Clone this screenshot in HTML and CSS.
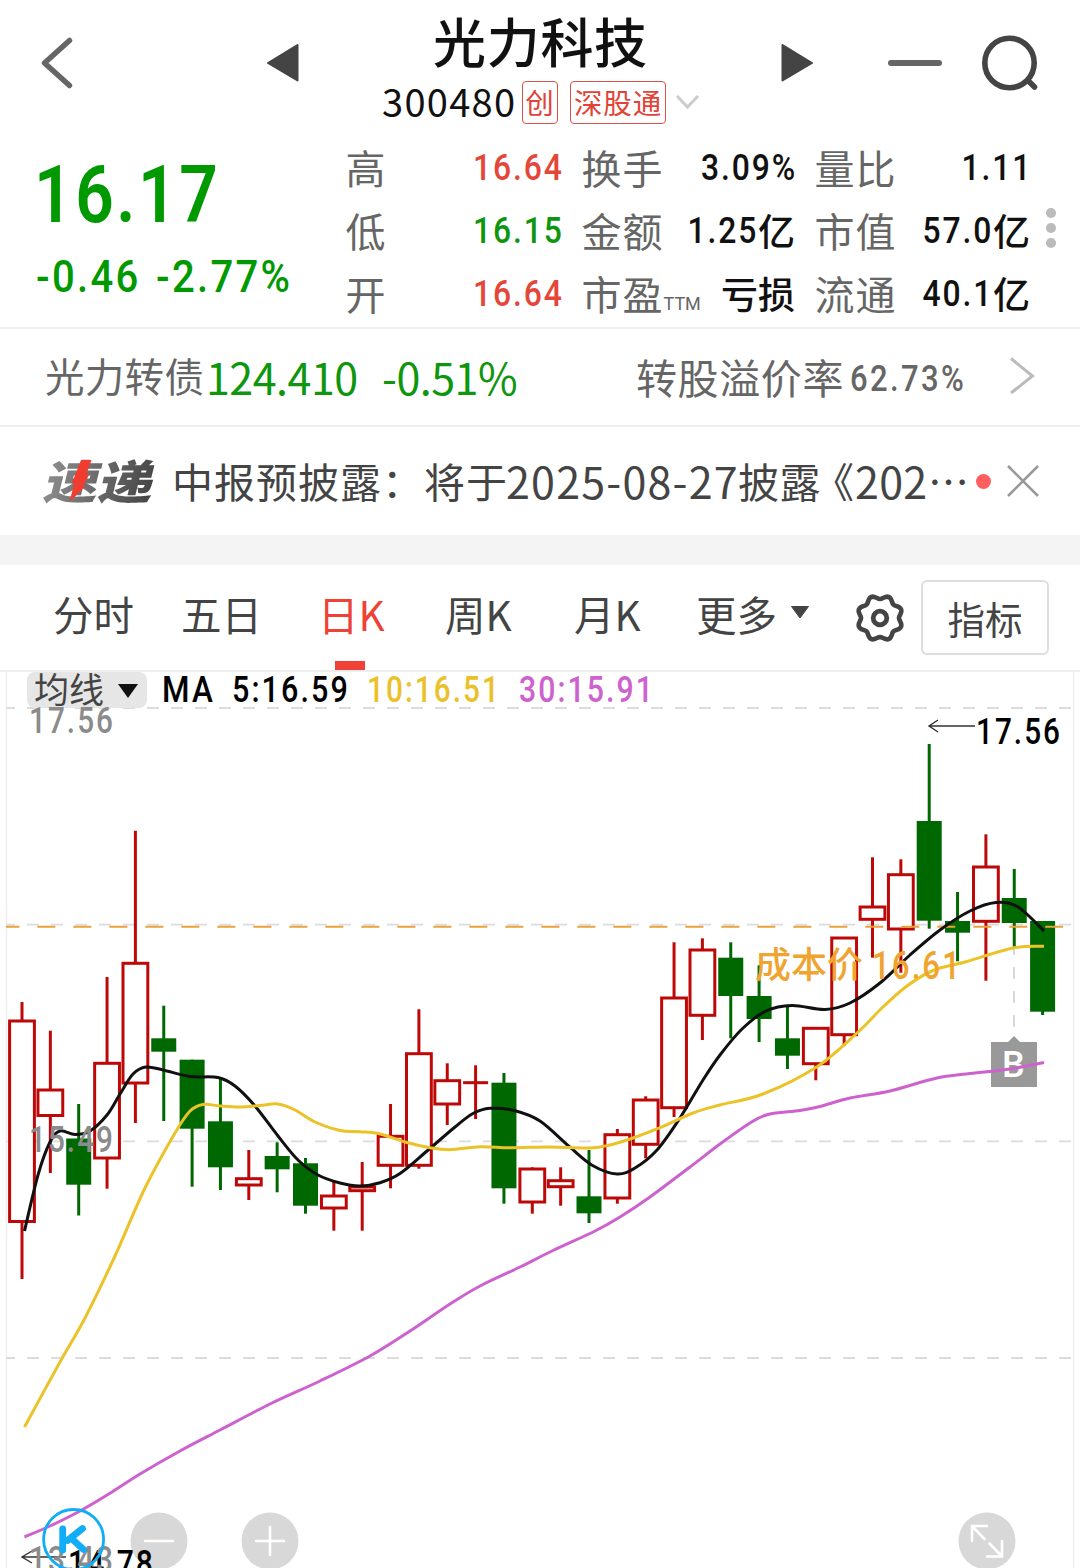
FILE: index.html
```html
<!DOCTYPE html>
<html lang="zh-CN">
<head>
<meta charset="utf-8">
<title>光力科技 300480</title>
<link rel="stylesheet" href="styles.css">
</head>
<body>
<header class="topbar">
  <svg class="ico" width="40" height="60" viewBox="37 33 40 60"><path d="M69.500 40.500L44.500 63L69.500 85.500" fill="none" stroke="#666" stroke-width="5.500" stroke-linecap="round" stroke-linejoin="round"/></svg>
  <svg class="ico" width="36" height="42" viewBox="265 42 36 42"><path d="M268 63L297.500 45V80.500Z" fill="#444" stroke="#444" stroke-width="2" stroke-linejoin="round"/></svg>
  <div class="name">
    <h1>光力科技</h1>
    <div class="code"><span class="num">300480</span><span class="tag one">创</span><span class="tag three">深股通</span>
      <svg width="26" height="18" viewBox="674 93 26 18"><path d="M677 96L687.500 107L698 96" fill="none" stroke="#ccc" stroke-width="3"/></svg></div>
  </div>
  <svg class="ico" width="36" height="42" viewBox="779 42 36 42"><path d="M812 63L782.500 45V80.500Z" fill="#444" stroke="#444" stroke-width="2" stroke-linejoin="round"/></svg>
  <svg class="ico" width="60" height="20" viewBox="885 53 60 20"><path d="M891 63H939" stroke="#666" stroke-width="6" stroke-linecap="round"/></svg>
  <svg class="ico" width="64" height="64" viewBox="977 31 64 64"><g fill="none" stroke="#444" stroke-width="5.600" stroke-linecap="round"><circle cx="1009.500" cy="63" r="24.700"/><path d="M1028 80.500L1034.500 87"/></g></svg>
</header>

<section class="quote">
  <div class="price">
    <div class="big din">16.17</div>
    <div class="chg"><span class="din">-0.46</span><span class="din">-2.77%</span></div>
  </div>
  <div class="stats">
    <div class="k">高</div><div class="v red"><b class="din">16.64</b></div>
    <div class="k">换手</div><div class="v"><b class="din">3.09%</b></div>
    <div class="k">量比</div><div class="v"><b class="din">1.11</b></div>
    <div class="k">低</div><div class="v green"><b class="din">16.15</b></div>
    <div class="k">金额</div><div class="v"><b class="din">1.25</b><i>亿</i></div>
    <div class="k">市值</div><div class="v"><b class="din">57.0</b><i>亿</i></div>
    <div class="k">开</div><div class="v red"><b class="din">16.64</b></div>
    <div class="k">市盈<small>TTM</small></div><div class="v"><i>亏损</i></div>
    <div class="k">流通</div><div class="v"><b class="din">40.1</b><i>亿</i></div>
  </div>
  <div class="dots"><span></span><span></span><span></span></div>
</section>

<section class="bond">
  <span class="bname">光力转债</span><span class="bnum p">124.410</span><span class="bnum c">-0.51%</span>
  <span class="prem">转股溢价率</span><span class="pval din">62.73%</span>
  <svg width="28" height="42" viewBox="1008 355 28 42"><path d="M1011 358.500L1032.500 376L1011 393" fill="none" stroke="#bbb" stroke-width="3"/></svg>
</section>

<section class="news">
  <svg class="logo" width="120" height="50" viewBox="38 456 120 50">
    <defs><linearGradient id="steel" x1="0" x2="1"><stop offset="0" stop-color="#8c8c8c"/><stop offset="1" stop-color="#454545"/></linearGradient></defs>
    <text transform="translate(42 499) skewX(-14)" textLength="109" lengthAdjust="spacingAndGlyphs" class="logotext" fill="url(#steel)">速递</text>
    <path d="M81 460H91.500L86.500 474L89 475L83.500 485L85.500 486L69.500 502L74 484L72 483Z" fill="#f13c30"/>
  </svg>
  <span class="cn t1">中报预披露：将于</span><span class="lt t2">2025-08-27</span><span class="cn t3">披露</span><span class="cn t4">《</span><span class="lt t5">202</span><span class="cn t6">…</span>
  <span class="reddot"></span>
  <svg width="34" height="34" viewBox="1006 465 34 34"><path d="M1008 467L1038 497M1038 467L1008 497" stroke="#999" stroke-width="2.600"/></svg>
</section>
<div class="band"></div>

<nav class="tabs">
  <span>分时</span><span>五日</span><span class="on">日K</span><span>周K</span><span>月K</span><span>更多</span>
  <svg class="drop" width="20" height="14" viewBox="790 605 20 14"><path d="M791.500 606.500H808.500L800 618Z" fill="#444" stroke="#444" stroke-linejoin="round"/></svg>
  <svg class="gear" width="52" height="52" viewBox="-26 -26 52 52"><path id="gear" fill="none" stroke="#444" stroke-width="4.600"/><circle r="6.800" fill="none" stroke="#444" stroke-width="4.800"/></svg>
  <button>指标</button>
</nav>

<svg class="chart" width="1080" height="896" viewBox="0 672 1080 896">
  <path d="M6.500 672V1568M1073.500 672V1568" stroke="#eee" stroke-width="1.500"/>
  <g class="grid"><path d="M6 708H1071"/><path d="M6 924.700H1071"/><path d="M6 1141.300H1071"/><path d="M6 1358H1071"/></g>
  <rect x="27" y="672" width="120" height="36" rx="8" fill="#e6e6e6"/>
  <text x="34" y="702.500" textLength="70" class="cn35">均线</text>
  <path d="M118 684H138L128 698Z" fill="#111"/>
  <g class="d">
    <text x="162" y="702" textLength="53" lengthAdjust="spacingAndGlyphs">MA</text>
    <text x="232" y="702" textLength="118" lengthAdjust="spacingAndGlyphs">5:16.59</text>
    <text x="367" y="702" textLength="134" lengthAdjust="spacingAndGlyphs" fill="#ebc12b">10:16.51</text>
    <text x="519" y="702" textLength="136" lengthAdjust="spacingAndGlyphs" fill="#cd62cf">30:15.91</text>
  </g>
  <g id="candles"></g>
  <path d="M6 926.700H1063" stroke="#e9a23b" stroke-width="2" stroke-dasharray="18 18" stroke-dashoffset="4.700"/>
  <path d="M1014 947V1030" stroke="#d8d8d8" stroke-width="2" stroke-dasharray="12 12" stroke-dashoffset="4"/>
  <path d="M991 1042H1008L1014 1036L1020 1042H1037V1087H991Z" fill="#999"/>
  <text x="1002" y="1077" class="b">B</text>
  <g id="lines"></g>
  <g class="d grey">
    <text x="29" y="733" textLength="86" lengthAdjust="spacingAndGlyphs">17.56</text>
    <text x="29" y="1152" textLength="86" lengthAdjust="spacingAndGlyphs">15.49</text>
  </g>
  <text x="755" y="978" textLength="108" class="cost">成本价</text>
  <text x="872" y="979" textLength="90" lengthAdjust="spacingAndGlyphs" class="d cnum">16.61</text>
  <text x="976" y="744" textLength="86" lengthAdjust="spacingAndGlyphs" class="d">17.56</text>
  <path d="M929 726H975M938 720L929 726L938 732" fill="none" stroke="#333" stroke-width="1.400"/>
  <g fill="#d8d8d8"><circle cx="159" cy="1541" r="28.500"/><circle cx="270" cy="1541" r="28.500"/><circle cx="987" cy="1541" r="28.500"/></g>
  <g fill="none" stroke="#fff" stroke-width="2.600" stroke-linecap="round" stroke-linejoin="round">
    <path d="M145 1541H173M256 1541H284M270 1527V1555"/>
    <path d="M987 1526H972V1541M972 1526L984.500 1539M987 1556.500H1002V1541M1002 1556.500L989.500 1543.500"/>
  </g>
  <path d="M22 1557H66M32 1551L22 1557L32 1563" fill="none" stroke="#333" stroke-width="1.400"/>
  <text x="68" y="1575.500" textLength="87" lengthAdjust="spacingAndGlyphs" class="d">14.78</text>
  <text x="29" y="1572" textLength="86" lengthAdjust="spacingAndGlyphs" class="d grey">13.43</text>
  <g fill="none" stroke="#12adf7"><circle cx="73.600" cy="1539.500" r="30" stroke-width="2.800"/><path d="M62.700 1529V1550M82.500 1528.500L67.500 1540.500M71 1538L83.500 1549.500" stroke-width="6.800" stroke-linecap="round"/></g>
</svg>
<script src="chart.js"></script>
</body>
</html>
```
FILE: styles.css
```css
* { box-sizing: border-box; }
body { margin: 0; width: 1080px; height: 1568px; overflow: hidden; background: #fff; color: #111; font-family: "Noto Sans CJK SC", sans-serif; }
svg { display: block; flex: none; }
.din { display: inline-block; font-family: Roboto, sans-serif; font-weight: 500; transform: scaleX(.85); transform-origin: left center; white-space: nowrap; }

.topbar { height: 137px; display: grid; grid-template-columns: 228px 101px 413px 106px 92px 95px; padding-left: 37px; }
.topbar .ico { align-self: start; margin-top: 33px; }
.topbar .ico:nth-child(2), .topbar .ico:nth-child(4) { margin-top: 42px; }
.topbar .ico:nth-child(5) { margin-top: 53px; }
.topbar .ico:nth-child(6) { margin-top: 31px; }
.name { padding-left: 16px; }
h1 { margin: 6px 0 2px 51px; font-size: 53px; line-height: 68px; font-weight: 500; letter-spacing: .7px; white-space: nowrap; }
.code { display: flex; align-items: center; height: 52px; }
.num { width: 140px; font-size: 38px; letter-spacing: 1.3px; line-height: 52px; margin-top: -3px; }
.tag { height: 43px; border: 1.500px solid #dc5247; border-radius: 4px; color: #e34236; font-size: 28.500px; line-height: 40px; text-align: center; white-space: nowrap; letter-spacing: .8px; }
.tag.one { width: 36px; margin-right: 12px; }
.tag.three { width: 96px; margin-right: 8px; }

.quote { height: 192px; display: flex; border-bottom: 2px solid #eee; }
.price { width: 346px; padding-left: 35px; color: #090; }
.big { display: block; font-size: 79.500px; line-height: 80px; letter-spacing: 3px; margin: 18px 0 0 -1px; font-weight: 600; }
.chg { display: flex; margin: 15px 0 0 1px; font-size: 45px; line-height: 54px; letter-spacing: 2.600px; }
.chg .din { transform: scaleX(.89); }
.chg .din:first-child { width: 120px; }
.stats { display: grid; grid-template-columns: 96px 140px 114px 119px 88px 127px; grid-template-rows: repeat(3, 63px); width: 684px; }
.stats .k { color: #666; font-size: 40px; line-height: 60px; letter-spacing: 1px; white-space: nowrap; text-indent: -.5px; }
.stats .k small { font-family: Roboto, sans-serif; font-size: 18px; letter-spacing: 0; }
.stats .v { display: flex; justify-content: flex-end; padding-right: 20px; font-size: 37.500px; line-height: 60px; white-space: nowrap; }
.stats .v:nth-child(6n) { padding-right: 0; }
.stats .v i { font-style: normal; font-size: 37px; font-weight: 500; }
.stats .v .din { letter-spacing: 2.200px; transform-origin: right center; line-height: 61px; }
.stats .v .din:last-child { margin-right: -2px; }
.red { color: #e5463a; } .green { color: #0f960f; }
.dots { padding: 71px 0 0 16px; display: flex; flex-direction: column; gap: 5.500px; }
.dots span { width: 9.500px; height: 9.500px; border-radius: 50%; background: #bbb; }

.bond { height: 98px; border-bottom: 2px solid #eee; display: flex; align-items: center; padding: 0 0 2px 45px; white-space: nowrap; color: #666; }
.bname { font-size: 39.500px; letter-spacing: .3px; width: 161px; margin-top: -3px; }
.bnum { color: #0f960f; font-size: 43px; letter-spacing: -.5px; }
.bnum.p { width: 176px; } .bnum.c { width: 254px; }
.prem { font-size: 41px; letter-spacing: .6px; width: 214px; }
.pval { font-size: 36.500px; letter-spacing: 2.800px; width: 158px; padding-top: 5px; }

.news { height: 108px; display: flex; align-items: center; padding-left: 38px; white-space: nowrap; color: #444; font-size: 41px; }
.news > span:not(.reddot) { margin-top: -2px; }
.logo { margin: 0 14px 0 0; }
.logotext { font-family: "Noto Sans CJK SC", sans-serif; font-weight: 900; font-size: 46px; }
.t1 { width: 334px; letter-spacing: 1px; } .t2 { width: 232px; font-size: 43px; letter-spacing: 1.200px; }
.t3 { width: 75px; letter-spacing: .5px; } .t4 { width: 42px; } .t5 { width: 73px; font-size: 43px; letter-spacing: .3px; } .t6 { width: 46px; }
.reddot { width: 15px; height: 15px; border-radius: 50%; background: #ff5f5f; margin: 0 15.500px 0 1.500px; }
.band { height: 30px; background: #f4f4f4; }

.tabs { height: 107px; border-bottom: 2px solid #eee; display: flex; align-items: flex-start; padding-left: 53px; color: #444; font-size: 40.500px; white-space: nowrap; }
.tabs span { line-height: 97px; height: 105px; width: 128px; }
.tabs span:nth-child(2) { width: 137px; }
.tabs span:nth-child(3) { width: 127px; }
.tabs span:nth-child(4) { width: 129px; }
.tabs span:nth-child(5) { width: 122px; }
.tabs span:nth-child(6) { width: 94px; }
.tabs .on { color: #ee4236; background: linear-gradient(#ef4136, #ef4136) 17px 100% / 30px 9px no-repeat; }
.drop { margin-top: 40px; }
.gear { margin: 27px 0 0 44px; }
.tabs button { width: 128px; height: 75px; margin: 15px 0 0 15px; padding: 0; border: 2px solid #ddd; border-radius: 6px; background: #fff; color: #444; font: 37.500px "Noto Sans CJK SC", sans-serif; }

.grid path { stroke: #dcdcdc; stroke-width: 1.800; stroke-dasharray: 12 12; stroke-dashoffset: 3; }
.d { font-family: Roboto, sans-serif; font-weight: 500; font-size: 36.500px; letter-spacing: 2.500px; }
.d.grey, .grey { fill: #8b8b8b; }
.cn35 { font-size: 35px; fill: #444; }
.cost { font-size: 36px; font-weight: 500; fill: #f0a32f; }
.cnum { font-size: 38px; fill: #f0a32f; }
.b { font: 500 36px Roboto, sans-serif; fill: #fff; }
```
FILE: chart.js
```js
// Candles: direction, high, body top, body bottom, low
const candles = [
  ['r',1002,1021,1221.5,1279],['r',1030.7,1090,1115.5,1173],['g',1104,1138.5,1184.7,1215.5],
  ['r',977,1063.3,1158,1188.7],['r',830.7,963.3,1083,1123],['g',1005.7,1038.3,1051.7,1121],
  ['g',1059.7,1059.7,1128.7,1186.7],['g',1078,1121.3,1167.3,1190],['r',1150,1178.7,1185,1200],
  ['g',1142.3,1156,1169.3,1192.3],['g',1158,1163.3,1205.7,1213.7],['r',1182,1196,1208,1230.7],
  ['r',1162,1187,1190.7,1230.7],['r',1104,1136.3,1165.3,1188.3],['r',1009.3,1053.7,1165.3,1168.7],
  ['r',1063.3,1080.7,1104,1125],['x',1065.3,1082.7,1082.7,1119],['g',1073,1082.7,1188.3,1203.7],
  ['r',1167.3,1169,1202,1213.7],['r',1167.3,1180.7,1186.7,1205.7],['g',1150,1196.3,1213.3,1223],
  ['r',1129,1134.7,1198,1203.7],['r',1096.3,1100,1144.3,1158.3],['r',942.3,998,1107.7,1117],
  ['r',938.3,950,1015.3,1040],['g',942.3,957.7,996,1038.3],['g',965.3,996,1019,1042],
  ['g',1006.7,1038.3,1055.7,1069],['r',1028.3,1028.3,1063.7,1080.3],['r',938,938,1034.7,1046],
  ['r',857.3,907,919.3,957.7],['r',859.3,874.7,929,972.7],['g',744,821,920.7,928.7],
  ['g',892,921,932.7,961.3],['r',834.3,867,921.3,980.7],['g',869,898,923,946.7],['g',921,921,1011.7,1015]
];
document.getElementById('candles').innerHTML = candles.map(([t, h, a, b, l], i) => {
  const x = 22 + 28.35 * i, c = t === 'g' ? '#006800' : '#bd0808';
  const wick = `<path d="M${x} ${h}V${l}" stroke="${c}" stroke-width="3"/>`;
  if (t === 'x') return wick + `<path d="M${x - 12.5} ${a}H${x + 12.5}" stroke="${c}" stroke-width="3"/>`;
  if (t === 'g') return wick + `<rect x="${x - 12.5}" y="${a}" width="25" height="${b - a}" fill="${c}"/>`;
  return wick + `<rect x="${x - 12.4}" y="${a}" width="24.800" height="${b - a}" fill="#fff" stroke="${c}" stroke-width="3"/>`;
}).join('');

const averages = {
  '#111': [24.5,1231,38,1175,50,1142,60,1131,75,1134.5,90,1131,107,1115,120,1094,133,1074,146,1067,163,1070,190,1076.5,218,1077.5,235,1086,255,1106,278,1136,298,1160,318,1175,340,1183,360,1186,380,1182.7,400,1173.5,427,1151,455,1127,473,1113.5,490,1108.3,515,1110.7,540,1121,570,1147.2,593,1165.7,617,1174,635,1168,657,1150,680,1118,703,1080,720,1055,742,1029,766,1011,792,1005.5,825,1009.5,850,1003,880,983,910,955,940,930,970,911,996,902.5,1018,907,1044,931],
  '#ebc227': [24.5,1427,60,1362,85,1318,115,1256,145,1188,175,1133,190,1111,203,1104.5,220,1106,240,1107,260,1105.5,278,1104,295,1110,315,1122,340,1130.5,360,1131.7,380,1134,405,1142,430,1147.7,450,1149.7,480,1146.7,510,1147.7,550,1147,590,1148,610,1145,633,1138,660,1127.7,693,1113,720,1105,763,1094,817,1066.7,857,1033,883,1007,907,986,933,970.5,967,961.5,1013,948,1044,946.3],
  '#cd62cf': [24.5,1537,50,1526,80,1511,112,1492,140,1474,180,1451,220,1430,270,1404,320,1381,370,1356,410,1331,450,1304,480,1286,520,1267,552,1251,595,1231,620,1217,650,1197,690,1167,720,1144,750,1123,768,1114.5,800,1110.5,820,1106.5,850,1098,890,1091,935,1078.5,970,1073.5,1010,1069,1044,1062.5]
};
function smooth(v) {
  const p = [];
  for (let i = 0; i < v.length; i += 2) p.push([v[i], v[i + 1]]);
  let d = `M${p[0]}`;
  for (let i = 0; i < p.length - 1; i++) {
    const a = p[i - 1] || p[i], b = p[i], c = p[i + 1], e = p[i + 2] || c;
    d += `C${b[0] + (c[0] - a[0]) / 6} ${b[1] + (c[1] - a[1]) / 6} ${c[0] - (e[0] - b[0]) / 6} ${c[1] - (e[1] - b[1]) / 6} ${c[0]} ${c[1]}`;
  }
  return d;
}
document.getElementById('lines').innerHTML = Object.entries(averages)
  .map(([c, v]) => `<path d="${smooth(v)}" fill="none" stroke="${c}" stroke-width="3"/>`).join('');

// Gear outline: eight soft lobes around the centre
let g = '';
for (let i = 0; i < 96; i++) {
  const t = i * Math.PI / 48, r = 20.9 - 1.9 * Math.cos(8 * t);
  g += (i ? 'L' : 'M') + r * Math.cos(t) + ' ' + r * Math.sin(t);
}
document.getElementById('gear').setAttribute('d', g + 'Z');
```
